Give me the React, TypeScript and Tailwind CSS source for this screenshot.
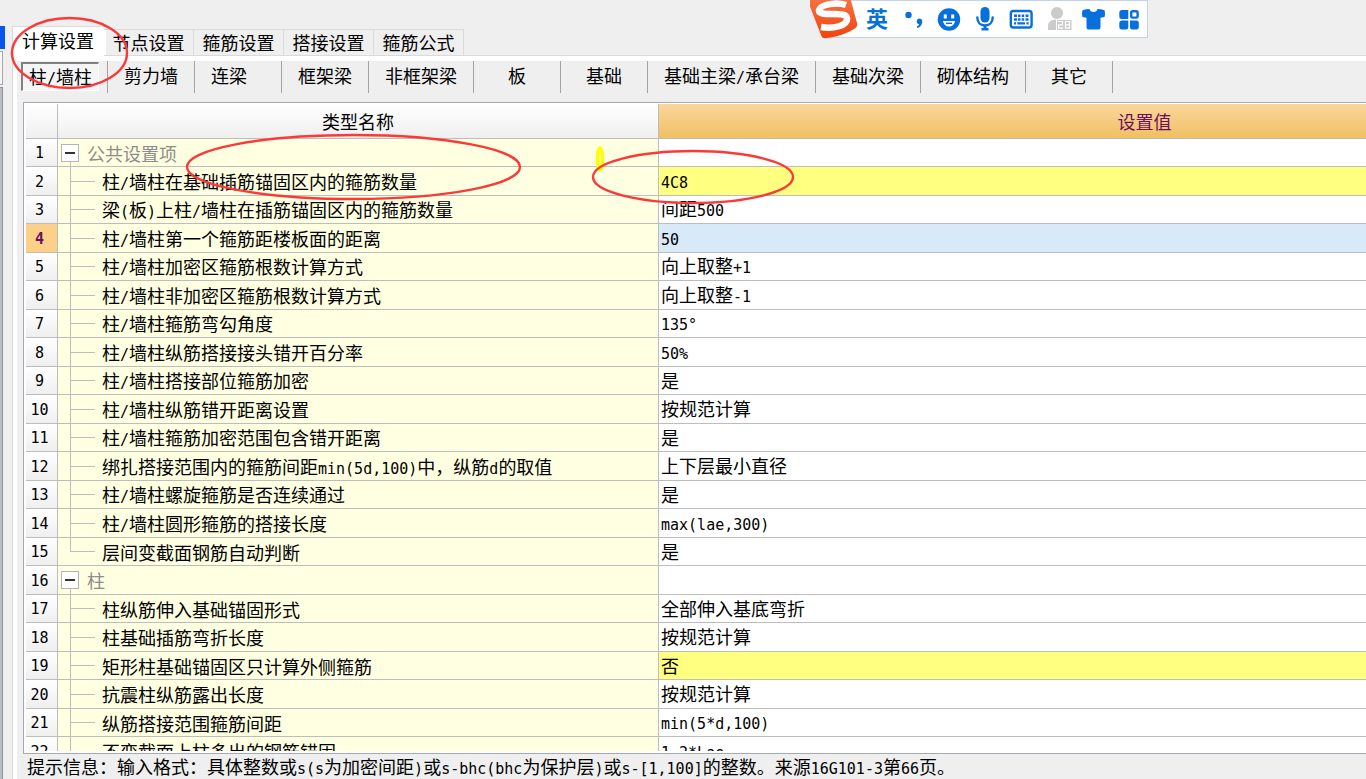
import { useState } from "react";
import clsx from "clsx";

type Row = {
  name: string;
  value?: string;
  group?: boolean;
  last?: boolean;
  changed?: boolean;
};

const TABS = ["计算设置", "节点设置", "箍筋设置", "搭接设置", "箍筋公式"];

const MEMBERS = [
  "剪力墙",
  "连梁",
  "框架梁",
  "非框架梁",
  "板",
  "基础",
  "基础主梁/承台梁",
  "基础次梁",
  "砌体结构",
  "其它"
];

const ROWS: Row[] = [
  { name: "公共设置项", group: true },
  { name: "柱/墙柱在基础插筋锚固区内的箍筋数量", value: "4C8", changed: true },
  { name: "梁(板)上柱/墙柱在插筋锚固区内的箍筋数量", value: "间距500" },
  { name: "柱/墙柱第一个箍筋距楼板面的距离", value: "50" },
  { name: "柱/墙柱加密区箍筋根数计算方式", value: "向上取整+1" },
  { name: "柱/墙柱非加密区箍筋根数计算方式", value: "向上取整-1" },
  { name: "柱/墙柱箍筋弯勾角度", value: "135°" },
  { name: "柱/墙柱纵筋搭接接头错开百分率", value: "50%" },
  { name: "柱/墙柱搭接部位箍筋加密", value: "是" },
  { name: "柱/墙柱纵筋错开距离设置", value: "按规范计算" },
  { name: "柱/墙柱箍筋加密范围包含错开距离", value: "是" },
  { name: "绑扎搭接范围内的箍筋间距min(5d,100)中，纵筋d的取值", value: "上下层最小直径" },
  { name: "柱/墙柱螺旋箍筋是否连续通过", value: "是" },
  { name: "柱/墙柱圆形箍筋的搭接长度", value: "max(lae,300)" },
  { name: "层间变截面钢筋自动判断", value: "是", last: true },
  { name: "柱", group: true },
  { name: "柱纵筋伸入基础锚固形式", value: "全部伸入基底弯折" },
  { name: "柱基础插筋弯折长度", value: "按规范计算" },
  { name: "矩形柱基础锚固区只计算外侧箍筋", value: "否", changed: true },
  { name: "抗震柱纵筋露出长度", value: "按规范计算" },
  { name: "纵筋搭接范围箍筋间距", value: "min(5*d,100)" },
  { name: "不变截面上柱多出的钢筋锚固", value: "1.2*Lae" }
];

// Latin runs are set in a half-width mono face, so two letters take one Chinese character
const Mixed = ({ text }: { text: string }) => (
  <>
    {text.split(/([\x20-\x7e°]+)/).map((part, i) =>
      i % 2 ? (
        <span key={i} className="font-['DejaVu_Sans_Mono','Noto_Sans_CJK_SC',monospace] text-[15px] leading-none">
          {part}
        </span>
      ) : (
        part
      )
    )}
  </>
);

const TreeLine = ({ last }: { last?: boolean }) => (
  <span className="ml-3 mr-[7px] flex h-full w-[25px] flex-col" aria-hidden>
    <span className="flex-1 border-b border-l border-[#bdbdbd]" />
    <span className={clsx("flex-1", !last && "border-l border-[#bdbdbd]")} />
  </span>
);

const GroupToggle = ({ name }: { name: string }) => (
  <span className="ml-[3px] mr-2 flex h-full w-[18px] flex-col items-center">
    <span className="flex-1" />
    <button
      type="button"
      aria-label={name}
      className="flex h-[18px] w-[18px] items-center justify-center border border-[#b5b5b5] bg-white"
    >
      <span className="h-0.5 w-2.5 bg-[#333]" />
    </button>
    <span className="flex-1 border-l border-[#bdbdbd]" />
  </span>
);

const SogouLogo = () => (
  <svg viewBox="0 0 50 40" className="z-10 h-10 w-[50px] shrink-0" aria-hidden>
    <defs>
      <linearGradient id="logo" x1="0" y1="0" x2="0" y2="1">
        <stop offset="0" stopColor="#f8774a" />
        <stop offset="1" stopColor="#f1450c" />
      </linearGradient>
    </defs>
    <path
      d="M-1 4 Q-2 0 3 -1 L34 -7 Q39 -7 40 -3 L47 23 Q48 27 44 29 Q33 36 17 38 Q12 39 11 35 Z"
      fill="url(#logo)"
    />
    <path
      d="M36 5 C27 2 11 4 9 10 C8 18 36 10 37 18 C38 26 23 29 11 27"
      fill="none"
      stroke="#fff"
      strokeWidth="6.5"
    />
  </svg>
);

const ImeBar = () => (
  <div className="absolute left-[810px] top-0 flex h-[38px] items-start">
    <SogouLogo />
    <div className="-ml-9 flex h-[38px] items-center gap-3 border border-[#c3d4ea] bg-white pl-10 pr-1.5 text-[#0870dc]">
      <span className="w-6 pb-1 text-center font-['Noto_Sans_CJK_SC',sans-serif] text-[22px] font-bold leading-6">英</span>
      <svg viewBox="0 0 24 24" className="h-6 w-6" fill="currentColor" aria-hidden>
        <circle cx="7.5" cy="8" r="3.2" />
        <path d="M18 11.5a3.2 3.2 0 0 1 3.2 3.4c0 3-2 5.2-4.9 6l-.6-1.4c1.5-.7 2.3-1.5 2.4-2.3a2.9 2.9 0 0 1-.1-5.7z" />
      </svg>
      <svg viewBox="0 0 24 24" className="h-6 w-6" aria-hidden>
        <circle cx="12" cy="12.5" r="11.2" fill="currentColor" />
        <path d="M6.8 7.5h3v4h-3zM14.2 7.5h3v4h-3z" fill="#fff" />
        <path d="M6 14h12c-.5 3.5-3 5.5-6 5.5S6.5 17.5 6 14z" fill="#fff" />
        <path d="M9 15.6h6v1.4H9z" fill="currentColor" />
      </svg>
      <svg viewBox="0 0 24 24" className="h-6 w-6" aria-hidden>
        <rect x="7.5" y="0" width="9" height="15.5" rx="4.5" fill="currentColor" />
        <path d="M4.3 10.5c0 5 3.4 8 7.7 8s7.7-3 7.7-8" fill="none" stroke="currentColor" strokeWidth="2.4" strokeLinecap="round" />
        <path d="M10.5 18h3v3h2v2.6h-7V21h2z" fill="currentColor" />
      </svg>
      <svg viewBox="0 0 24 24" className="h-6 w-6" aria-hidden>
        <rect x="1.8" y="4" width="20.8" height="16.5" rx="2.5" fill="none" stroke="currentColor" strokeWidth="2.4" />
        <path
          d="M5 7.5h3v2.5H5zM9 7.5h2.5V10H9zM12.7 7.5h2.5V10h-2.5zM16.5 7.5h3V10h-3zM5 11.2h3v2.5H5zM9 11.2h2.5v2.5H9zM12.7 11.2h2.5v2.5h-2.5zM16.5 11.2h3v2.5h-3zM5 15.2h2v2.3H5zM8.3 15.2h7.7v2.3H8.3zM17.4 15.2h2.2v2.3h-2.2z"
          fill="currentColor"
        />
      </svg>
      <svg viewBox="0 0 28 24" className="-mr-1 h-6 w-7" aria-hidden>
        <circle cx="12" cy="6" r="6" fill="#cbcbcb" />
        <path d="M3 23v-4c0-4.5 3.5-6.5 9-6.5s9 2 9 6.5v4z" fill="#cbcbcb" />
        <rect x="11.5" y="12.5" width="15.5" height="11" fill="#cbcbcb" stroke="#fff" strokeWidth="1" />
        <path d="M13 14.5h4.5v3.3H13.6v3.4h4.5M20.5 14.5h4v6.7h-4zM20.5 17.8h4" fill="none" stroke="#fff" strokeWidth="1.2" />
      </svg>
      <svg viewBox="0 0 24 24" className="h-6 w-6" fill="currentColor" aria-hidden>
        <path d="M1.5 3.2Q5 2 8.5 2q.8 3 4 3t4-3q3.5 0 7 1.2Q24.5 7 23.5 10l-4 .8v9.7q0 2-2 2h-10q-2 0-2-2v-9.7l-4-.8Q.5 7 1.5 3.2z" />
      </svg>
      <svg viewBox="0 0 24 24" className="h-6 w-6" aria-hidden>
        <path
          d="M5 3h6.3v9H5a2.5 2.5 0 0 1-2.7-2.5v-4A2.5 2.5 0 0 1 5 3zM5 13.5h6.3V20a2.5 2.5 0 0 1-2.5 2.5H5A2.5 2.5 0 0 1 2.3 20v-4A2.5 2.5 0 0 1 5 13.5zM13 13.5h6.3a2.5 2.5 0 0 1 2.5 2.5v4a2.5 2.5 0 0 1-2.5 2.5h-3.8A2.5 2.5 0 0 1 13 20z"
          fill="currentColor"
        />
        <rect x="14.2" y="4.2" width="6.4" height="6.4" rx="1.5" fill="none" stroke="currentColor" strokeWidth="2.4" />
      </svg>
    </div>
  </div>
);

const Markup = () => (
  <svg className="pointer-events-none absolute left-0 top-0 h-[220px] w-[820px]" viewBox="0 0 820 220" fill="none" aria-hidden>
    <ellipse cx="600" cy="159" rx="2.5" ry="11" stroke="#ffff00" strokeWidth="3.5" />
    <g stroke="#fb3a38" strokeWidth="2.4">
      <ellipse cx="69.5" cy="53" rx="57.5" ry="35" />
      <ellipse cx="353.5" cy="167" rx="166.5" ry="32" />
      <ellipse cx="693" cy="177" rx="100" ry="26" />
    </g>
  </svg>
);

export default function App() {
  const [tab, setTab] = useState(0);
  const [selected, setSelected] = useState(3);

  return (
    <div className="relative flex h-screen overflow-hidden bg-[#efefef] pt-[26px] font-['Noto_Sans_CJK_SC',sans-serif] text-lg leading-6 text-black">
      <aside className="flex w-3 shrink-0 flex-col">
        <div className="h-[23px] w-[5px] bg-[#0457e8]" />
        <div className="mt-0.5 h-[34px] w-[3px] border-y border-r border-[#a8a8a8] bg-[#f6f6f6]" />
        <div className="mt-0.5 w-[3px] flex-1 border-r border-t border-[#8e9399] bg-[#b9bec4]" />
      </aside>

      <main className="flex min-w-0 flex-1 flex-col border-l border-[#dadada]">
        <div className="flex items-end" role="tablist">
          {TABS.map((label, i) => (
            <button
              key={label}
              type="button"
              role="tab"
              aria-selected={i === tab}
              onClick={() => setTab(i)}
              className={clsx(
                "whitespace-nowrap border-t border-[#dadada]",
                i === tab ? "-mr-0.5 h-[30px] bg-white pb-1 pl-[9px] pr-3" : "h-[27px] min-w-[90px] border-b border-r pb-0.5"
              )}
            >
              {label}
            </button>
          ))}
          <span className="flex-1 border-b border-[#dadada]" />
        </div>

        <div className="flex min-h-0 flex-1 flex-col bg-white pl-1 pt-[5px]">
          <div className="flex min-h-0 flex-1 flex-col bg-[#efefef]">
            <div className="flex h-[41px] shrink-0 items-start pl-1">
              <button
                type="button"
                aria-pressed="true"
                className="mr-2 mt-px h-[29px] whitespace-nowrap border-b border-l-2 border-r border-t-2 border-b-white border-l-[#808080] border-r-white border-t-[#808080] bg-[#f5f5f5] px-1.5 pb-0.5"
              >
                <Mixed text="柱/墙柱" />
              </button>
              {MEMBERS.map((label) => (
                <button
                  key={label}
                  type="button"
                  className="h-8 min-w-[87px] whitespace-nowrap border-l border-[#a3a3a3] px-4 pb-1 text-left nth-[6]:text-center nth-[7]:text-center nth-[11]:text-center"
                >
                  <Mixed text={label} />
                </button>
              ))}
              <span className="h-8 border-l border-[#a3a3a3]" />
            </div>

            <div className="ml-1.5 min-h-0 flex-1 overflow-hidden border-b border-l border-t border-[#a5a9b2] bg-white pb-0.5 pl-0.5 pt-px">
              <div className="h-full overflow-hidden">
                <table className="w-[1604px] table-fixed border-separate border-spacing-0 leading-5">
                  <colgroup>
                    <col className="w-8" />
                    <col className="w-[601px]" />
                    <col />
                  </colgroup>
                  <thead>
                    <tr className="h-[35px]">
                      <th className="border-b border-r border-[#bdbdbd] bg-linear-to-b from-white to-[#efefef]" />
                      <th className="border-b border-r border-[#bdbdbd] bg-linear-to-b from-white to-[#efefef] font-normal">
                        类型名称
                      </th>
                      <th className="border-b border-[#bdbdbd] bg-linear-to-b from-[#fad69c] to-[#f0c060] font-normal text-[#6a0f60]">
                        设置值
                      </th>
                    </tr>
                  </thead>
                  <tbody>
                    {ROWS.map((row, i) => (
                      <tr key={row.name} className="group whitespace-nowrap" onClick={() => setSelected(i)}>
                        <th
                          scope="row"
                          className={clsx(
                            "border-b border-r border-[#bdbdbd] p-0 pb-1 pr-1",
                            i === selected
                              ? "bg-[#fdd08a] font-bold text-[#6a0f60]"
                              : "bg-linear-to-b from-white to-[#efefef] font-normal"
                          )}
                        >
                          <Mixed text={String(i + 1)} />
                        </th>
                        <td className="border-b border-r border-[#bdbdbd] bg-[#ffffe1] p-0">
                          <div className="flex h-[27px] items-center group-even:h-7">
                            {row.group ? <GroupToggle name={row.name} /> : <TreeLine last={row.last} />}
                            <span className={clsx(row.group && "text-[#8c8c8c]")}>
                              <Mixed text={row.name} />
                            </span>
                          </div>
                        </td>
                        <td
                          className={clsx(
                            "border-b border-[#bdbdbd] p-0 pb-0.5 pl-0.5",
                            row.changed ? "bg-[#ffff80]" : i === selected ? "bg-[#d8e9f8]" : "bg-white"
                          )}
                        >
                          <Mixed text={row.value ?? ""} />
                        </td>
                      </tr>
                    ))}
                  </tbody>
                </table>
              </div>
            </div>

            <footer className="h-[25px] shrink-0 whitespace-nowrap pl-2.5">
              <Mixed text="提示信息：输入格式：具体整数或s(s为加密间距)或s-bhc(bhc为保护层)或s-[1,100]的整数。来源16G101-3第66页。" />
            </footer>
          </div>
        </div>
      </main>

      <ImeBar />
      <Markup />
    </div>
  );
}
